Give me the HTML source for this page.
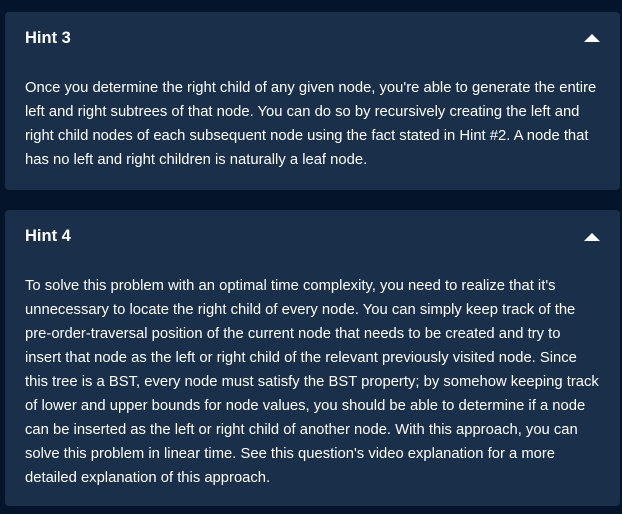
<!DOCTYPE html>
<html><head><style>
body{margin:0;background:#04142a;width:622px;height:514px;overflow:hidden;font-family:"Liberation Sans",sans-serif;color:#fff}
.card{position:absolute;left:5px;width:615px;background:#1a2f4a;border-radius:4px}
h3{position:absolute;left:20px;margin:0;font-size:16.5px;font-weight:bold}
p{position:absolute;left:20px;width:590px;margin:0;font-size:14.8px;line-height:24px;white-space:nowrap}
.tri{position:absolute;right:20px;width:0;height:0;border-left:8px solid transparent;border-right:8px solid transparent;border-bottom:8px solid #fff}
</style></head><body>
<div class="card" style="top:12px;height:178px">
<h3 style="top:17px">Hint 3</h3><div class="tri" style="top:22px"></div>
<p style="top:64px">Once you determine the right child of any given node, you're able to generate the entire<br>left and right subtrees of that node. You can do so by recursively creating the left and<br>right child nodes of each subsequent node using the fact stated in Hint #2. A node that<br>has no left and right children is naturally a leaf node.</p>
</div>
<div class="card" style="top:210px;height:296px">
<h3 style="top:17px">Hint 4</h3><div class="tri" style="top:23px"></div>
<p style="top:64px">To solve this problem with an optimal time complexity, you need to realize that it's<br>unnecessary to locate the right child of every node. You can simply keep track of the<br>pre-order-traversal position of the current node that needs to be created and try to<br>insert that node as the left or right child of the relevant previously visited node. Since<br>this tree is a BST, every node must satisfy the BST property; by somehow keeping track<br>of lower and upper bounds for node values, you should be able to determine if a node<br>can be inserted as the left or right child of another node. With this approach, you can<br>solve this problem in linear time. See this question's video explanation for a more<br>detailed explanation of this approach.</p>
</div>
</body></html>
